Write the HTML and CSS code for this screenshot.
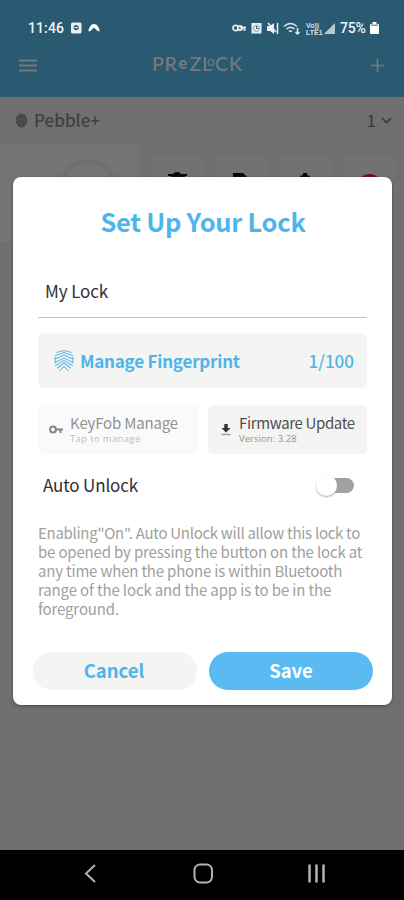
FILE: index.html
```html
<!DOCTYPE html>
<html lang="en">
<head>
<meta charset="utf-8">
<title>PREZLOCK</title>
<link rel="stylesheet" href="styles.css">
</head>
<body>
<div class="phone">
  <header class="top">
    <div class="status">
      <span class="clock">11:46</span>
      <svg class="status-left" width="30" height="12" viewBox="0 0 30 12">
        <rect x="0" y="0.5" width="10.5" height="11" rx="1.5" fill="#e8f0f3"/>
        <circle cx="5.2" cy="5.6" r="2.6" fill="#47616e"/><path d="M3.5 5.5h3.5" stroke="#e8f0f3"/>
        <path d="M17.500 9.500a5.500 7.500 0 0 1 11 0L26.500 9 23 5.500 19.500 9z" fill="#fff"/>
      </svg>
      <svg class="status-right" width="105" height="14" viewBox="0 0 105 14">
        <g fill="none" stroke="#dce6ea" stroke-width="1.8">
          <circle cx="3.7" cy="7" r="2.7"/><circle cx="8" cy="7" r="2.2"/><path d="M8 6.5h6M12.5 7v3"/>
        </g>
        <path d="M19.5 2h10v10.500h-10z" fill="#e8f0f3"/>
        <circle cx="24.500" cy="7.300" r="3" fill="none" stroke="#718893" stroke-width="0.8"/><path d="M24.500 5v2.500h2" fill="none" stroke="#315e72"/>
        <path d="M35 5h3l4-3v11l-4-3h-3z" fill="#e8f0f3"/><path d="M36 2l8 9M45.500 2v11" stroke="#e8f0f3" stroke-width="1.500"/>
        <g fill="none" stroke="#dce6ea" stroke-width="1.600"><path d="M52 5.500q6.500-6 13 0M54.500 8q4-3.500 8 0M57 10.500q1.500-1 3 0"/><path d="M65.500 7v6M63.500 11l2 2 2-2"/></g>
        <g class="volte"><text x="74" y="7">Vo))</text><text x="74" y="13.500">LTE1</text></g>
        <path d="M92 13h11V2z" fill="#b9c9d1"/>
      </svg>
      <span class="percent">75%</span>
      <svg class="battery" width="9" height="12" viewBox="0 0 9 12"><path d="M2.500 0h4v2H8q1 0 1 1v8q0 1-1 1H1q-1 0-1-1V3q0-1 1-1h1.500z" fill="#fff"/><path d="M1 2.500h7v1.500H1z" fill="#7b949f"/></svg>
    </div>
    <nav class="bar">
      <svg class="menu" width="18" height="13" viewBox="0 0 18 13"><path d="M0 1.500h18M0 6.500h18M0 11.500h18" stroke="#75797c" stroke-width="2.200"/></svg>
      <div class="logo"><span class="w12 heavy">P</span><span class="w13 heavy">R</span><span class="w11 small-e">e</span><span class="w12 heavy">Z</span><span class="w5 ell">L</span><span class="small-o">o</span><span class="w13">C</span><span class="w13">K</span></div>
      <svg class="plus" width="13" height="13" viewBox="0 0 13 13"><path d="M6.500 0v13M0 6.500h13" stroke="#75797c" stroke-width="1.700"/></svg>
    </nav>
  </header>

  <main class="page">
    <div class="group">
      <svg class="pebble" width="13" height="15" viewBox="0 0 13 15"><ellipse cx="6.500" cy="7.500" rx="5.700" ry="7" fill="#464646"/><path d="M2 4q4.500-4 9 0M1 8q5-5 11 0M3 12q0-5 3.500-5t3.500 5M6.500 9v5" fill="none" stroke="#5a5a5a" stroke-width="0.700"/></svg>
      <span class="group-name">Pebble+</span>
      <span class="group-count">1</span>
      <svg width="11" height="7" viewBox="0 0 11 7"><path d="M1 1l4.500 4.500L10 1" fill="none" stroke="#393939" stroke-width="1.600"/></svg>
    </div>
    <div class="tiles">
      <div class="lock-tile"><svg width="66" height="33" viewBox="0 0 66 33"><circle cx="33" cy="33" r="27" fill="none" stroke="#6f6f6f" stroke-width="4"/></svg></div>
      <div class="tile"><svg width="22" height="12" viewBox="0 0 22 12"><path d="M1 5V3h5q1-2 4-2t4 2h6v2h-2v7H4V5z" fill="#060606"/></svg></div>
      <div class="tile"><svg width="22" height="12" viewBox="0 0 22 12"><path d="M2 2h10l5 5v5H2z" fill="#060606"/></svg></div>
      <div class="tile"><svg width="22" height="12" viewBox="0 0 22 12"><path d="M8 2h4v2l3 1v7H5V5l3-1z" fill="#060606"/></svg></div>
      <div class="tile"><svg width="22" height="12" viewBox="0 0 22 12"><path d="M2 6q4-3 8.500-3T19 6v6H2z" fill="#740b10"/></svg></div>
    </div>
  </main>

  <footer class="navigation">
    <svg width="404" height="49" viewBox="0 0 404 49"><g fill="none" stroke="#b2b2b2" stroke-width="2"><path d="M95 15L86 23.500l9 8.500"/><rect x="194.500" y="14.500" width="17.500" height="18" rx="5.500"/><path d="M309.500 14.500v18M316.500 14.500v18M323.500 14.500v18" stroke-width="2.500"/></g></svg>
  </footer>

  <section class="dialog">
    <h1>Set Up Your Lock</h1>
    <div class="field">My Lock</div>
    <div class="fingerprint">
      <svg width="20" height="22" viewBox="0 0 20 22"><g fill="none" stroke="#5bb8ed" stroke-width="1.050" stroke-linecap="round"><path d="M3 2.500Q10-1 17 2.500M1.500 5.500L10 2.500l8.500 3M1 9l9-4 9 4M1 12.500l9-4.500 9 4.500M1.500 15.500l8.500-5 8.500 5M3.500 18l6.500-5 6.500 5M6 20.500l4-4 4 4M1 7v6M19 7v6"/></g></svg>
      <span class="fp-label">Manage Fingerprint</span><span class="fp-count">1/100</span>
    </div>
    <div class="actions">
      <div class="action disabled">
        <svg width="14" height="9" viewBox="0 0 14 9"><circle cx="4" cy="4.500" r="2.900" fill="none" stroke="#858585" stroke-width="2"/><path d="M7 4.500h7M11.500 4.500v3.500" stroke="#858585" stroke-width="2"/></svg>
        <div><div class="name keyfob">KeyFob Manage</div><div class="hint tap">Tap to manage</div></div>
      </div>
      <div class="action firmware">
        <svg width="10" height="13" viewBox="0 0 10 13"><path d="M3.300 1h3.400v4H9.500L5 9.500.5 5h2.800z" fill="#333"/><path d="M.5 11.500h9" stroke="#999" stroke-width="1.400"/></svg>
        <div><div class="name update">Firmware Update</div><div class="hint version">Version: 3.28</div></div>
      </div>
    </div>
    <div class="unlock"><span>Auto Unlock</span><div class="switch"><i></i></div></div>
    <p><span class="l1">Enabling"On". Auto Unlock will allow this lock to</span><br><span class="l2">be opened by pressing the button on the lock at</span><br><span class="l3">any time when the phone is within Bluetooth</span><br><span class="l4">range of the lock and the app is to be in the</span><br><span class="l5">foreground.</span></p>
    <div class="buttons"><button class="cancel">Cancel</button><button class="save">Save</button></div>
  </section>
</div>
</body>
</html>
```

FILE: styles.css
```css
* { box-sizing: border-box; }
body { margin: 0; font-family: "Noto Sans CJK SC", "Open Sans", sans-serif; }
svg { display: block; flex: none; }
.phone { position: relative; width: 404px; height: 900px; overflow: hidden; background: #6f6f6f; display: flex; flex-direction: column; }
.top { height: 97px; background: #2a5a71; flex: none; }
.status { height: 46px; padding: 10px 25px 0 28px; display: flex; align-items: center; color: #edf4f7; font: 500 14px/24px Roboto, sans-serif; }
.clock { width: 43px; letter-spacing: .1px; }
.status-right { margin-left: auto; }
.percent { margin-left: 3px; width: 30px; letter-spacing: -.2px; }
.volte { font: bold 7px "Liberation Sans", sans-serif; fill: #d3e0e5; }
.bar { height: 38px; padding: 0 20px 0 19px; display: grid; grid-template-columns: 18px 1fr 13px; align-items: center; }
.logo { height: 20px; display: flex; padding-left: 115px; color: #75797c; font: 500 19.500px/20px Lato, sans-serif; margin-top: -2px; }
.heavy { font-weight: 600; }
.w12 { width: 12.500px; }
.w13 { width: 14px; }
.w11 { width: 11px; }
.w5 { width: 4px; }
.small-e { font-size: 16px; font-weight: 900; line-height: 18px; }
.small-o { font-size: 14px; line-height: 14px; width: 9px; padding-left: 1px; }
.page { flex: 1; }
.group { height: 47px; display: flex; align-items: center; padding: 0 12px 0 15px; color: #393939; font-size: 17px; line-height: 24px; }
.group-name { margin-left: 6px; font-weight: 500; color: #414141; margin-top: -1px; }
.group-count { margin-left: auto; margin-right: 5px; margin-top: -1px; }
.tiles { height: 98px; display: flex; gap: 13px; align-items: flex-start; }
.lock-tile { width: 140px; height: 98px; background: #747474; padding: 11px 0 0 55px; }
.tile { width: 51px; height: 70px; margin-top: 13px; background: #727272; padding: 14px 0 0 14px; border-radius: 4px; }
.navigation { height: 50px; background: #000; }
.dialog { position: absolute; left: 13px; top: 177px; width: 379px; height: 528px; background: #fff; border-radius: 8px; padding: 24px 19px 15px 20px; box-shadow: 0 1px 3px #444; display: flex; flex-direction: column; }
h1 { margin: 0 0 1px; text-align: center; color: #4eb5eb; font-size: 25.500px; line-height: 40px; font-weight: 700; letter-spacing: -.3px; }
.field { margin: 35px 6px 15px 5px; height: 41px; border-bottom: 1.500px solid #bebebe; padding-left: 7px; font-size: 17px; line-height: 28px; color: #303030; letter-spacing: -.1px; }
.fingerprint { margin: 0 6px 17px 5px; height: 55px; border-radius: 6px; background: #f4f4f2; color: #4eb5eb; display: flex; align-items: center; padding: 0 13px 0 16px; font-size: 17px; line-height: 28px; font-weight: 700; }
.fp-label { margin-left: 6px; letter-spacing: -.22px; }
.fp-count { margin-left: auto; font-weight: 500; }
.actions { margin: 0 6px 0 5px; display: grid; grid-template-columns: 160px 159px; gap: 10px; height: 49px; }
.action { display: flex; align-items: center; border-radius: 5px; background: #fafafa; padding-left: 11px; gap: 7px; white-space: nowrap; color: #929292; }
.firmware { background: #f4f4f2; color: #505050; padding-left: 13px; gap: 8px; }
.name { font-size: 15px; line-height: 19px; margin-top: -2px; letter-spacing: -.18px; }
.update { letter-spacing: -.36px; }
.hint { font: 9.500px/13px "Open Sans", sans-serif; color: #bababa; }
.tap { letter-spacing: .35px; }
.version { color: #929292; letter-spacing: .05px; }
.unlock { margin: 14px 19px 0 10px; height: 34px; display: flex; justify-content: space-between; align-items: center; font-size: 17px; line-height: 28px; color: #303030; letter-spacing: -.15px; }
.switch { width: 34px; height: 15px; margin-top: 1px; border-radius: 8px; background: #a1a1a1; }
.switch i { display: block; width: 21px; height: 21px; border-radius: 50%; background: #fff; margin: -3px 0 0 -4px; box-shadow: 0 1px 2px #aaa; }
p { margin: 21px 0 0 5px; color: #a0a0a0; font-size: 15px; line-height: 19px; white-space: nowrap; }
.l1 { letter-spacing: -.29px; }
.l2 { letter-spacing: -.17px; }
.l3 { letter-spacing: -.19px; }
.l4, .l5 { letter-spacing: -.14px; }
.buttons { margin-top: auto; display: grid; grid-template-columns: 164px 164px; gap: 12px; }
button { border: 0; padding: 0 2px 2px 0; height: 38px; border-radius: 20px; font: 700 18.500px/30px "Noto Sans CJK SC", sans-serif; }
.cancel { background: #f4f4f2; color: #4eb5eb; }
.save { background: #59bbf2; color: #fff; padding-right: 0; }
```
